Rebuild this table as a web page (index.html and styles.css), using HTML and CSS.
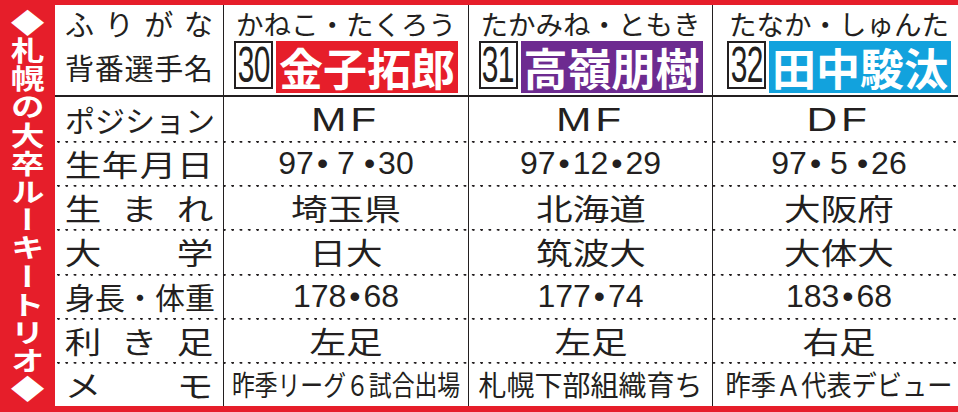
FILE: index.html
```html
<!DOCTYPE html>
<html lang="ja">
<head>
<meta charset="utf-8">
<title>札幌の大卒ルーキートリオ</title>
<link rel="stylesheet" href="styles.css">
</head>
<body>
<div class="frame">
  <div class="side"><span class="side-text">◆札幌の大卒ルーキートリオ◆</span></div>
  <div class="table">
    <div class="row head">
      <div class="label head-label">
        <div class="jl"><span>ふ</span><span>り</span><span>が</span><span>な</span></div>
        <div class="jl tall"><span>背</span><span>番</span><span>選</span><span>手</span><span>名</span></div>
      </div>
      <div class="cell head-cell">
        <div class="kana">かねこ・たくろう</div>
        <div class="badge"><span class="num"><span class="num-t">30</span></span><span class="name red">金子拓郎</span></div>
      </div>
      <div class="cell head-cell">
        <div class="kana">たかみね・ともき</div>
        <div class="badge"><span class="num"><span class="num-t">31</span></span><span class="name purple">高嶺朋樹</span></div>
      </div>
      <div class="cell head-cell">
        <div class="kana">たなか・しゅんた</div>
        <div class="badge"><span class="num"><span class="num-t">32</span></span><span class="name blue">田中駿汰</span></div>
      </div>
    </div>

    <div class="row first">
      <div class="label"><span>ポ</span><span>ジ</span><span>シ</span><span>ョ</span><span>ン</span></div>
      <div class="cell"><span class="pos">MF</span></div>
      <div class="cell"><span class="pos">MF</span></div>
      <div class="cell"><span class="pos">DF</span></div>
    </div>

    <div class="row">
      <div class="label wide"><span>生</span><span>年</span><span>月</span><span>日</span></div>
      <div class="cell"><span class="numv">97<i class="dot">•</i><span class="one">7</span><i class="dot">•</i>30</span></div>
      <div class="cell"><span class="numv">97<i class="dot">•</i>12<i class="dot">•</i>29</span></div>
      <div class="cell"><span class="numv">97<i class="dot">•</i><span class="one">5</span><i class="dot">•</i>26</span></div>
    </div>

    <div class="row">
      <div class="label wide"><span>生</span><span>ま</span><span>れ</span></div>
      <div class="cell"><span class="kv">埼玉県</span></div>
      <div class="cell"><span class="kv">北海道</span></div>
      <div class="cell"><span class="kv">大阪府</span></div>
    </div>

    <div class="row">
      <div class="label wide"><span>大</span><span>学</span></div>
      <div class="cell"><span class="kv">日大</span></div>
      <div class="cell"><span class="kv">筑波大</span></div>
      <div class="cell"><span class="kv">大体大</span></div>
    </div>

    <div class="row">
      <div class="label"><span>身</span><span>長</span><span>・</span><span>体</span><span>重</span></div>
      <div class="cell"><span class="numv">178<i class="dot">•</i>68</span></div>
      <div class="cell"><span class="numv">177<i class="dot">•</i>74</span></div>
      <div class="cell"><span class="numv">183<i class="dot">•</i>68</span></div>
    </div>

    <div class="row">
      <div class="label wide"><span>利</span><span>き</span><span>足</span></div>
      <div class="cell"><span class="kv">左足</span></div>
      <div class="cell"><span class="kv">左足</span></div>
      <div class="cell"><span class="kv">右足</span></div>
    </div>

    <div class="row">
      <div class="label wide"><span>メ</span><span>モ</span></div>
      <div class="cell"><span class="memo fit81">昨季リーグ６試合出場</span></div>
      <div class="cell"><span class="memo">札幌下部組織育ち</span></div>
      <div class="cell"><span class="memo fit90">昨季Ａ代表デビュー</span></div>
    </div>
  </div>
</div>
</body>
</html>
```

FILE: styles.css
```css
* { box-sizing: border-box; margin: 0; padding: 0; }
html, body { width: 958px; height: 412px; overflow: hidden; background: #e61e2a; }
body { font-family: "Noto Sans CJK JP", "Noto Sans", sans-serif; color: #231f20; }

.frame { display: flex; width: 958px; height: 412px; background: #e61e2a; }

.side { width: 55px; flex: none; display: flex; align-items: center; justify-content: center; }
.side-text {
  writing-mode: vertical-rl; text-orientation: upright;
  font-weight: 700; font-size: 27px; letter-spacing: 1.2px; line-height: 1;
  color: #fff; transform: scaleX(1.25);
}

.table { flex: 1; margin: 5px 7px 6px 0; background: #fff; display: flex; flex-direction: column; }

.row {
  display: grid; grid-template-columns: 168px 245px 244px 1fr; flex: 1;
  background-image: radial-gradient(circle at 1.5px 1.5px, #231f20 1.1px, transparent 1.6px);
  background-size: 8.3px 3px; background-repeat: repeat-x; background-position: 2px -1px;
}
.row.head { flex: none; height: 92px; border-bottom: 2px solid #231f20; background: none; }
.row.first { background: none; }

.cell { border-left: 1.5px solid #231f20; display: flex; align-items: center; justify-content: center; white-space: nowrap; }

.label { display: flex; align-items: center; justify-content: space-between; padding: 0 10px; font-size: 30px; line-height: 1; }
.label span { display: inline-block; }
.label.wide { padding: 0 13px; }
.label.wide span { transform: scaleX(1.22); }

.head-label { flex-direction: column; align-items: stretch; justify-content: flex-start; }
.jl { display: flex; justify-content: space-between; font-size: 29px; height: 36px; line-height: 36px; }
.jl.tall { height: 52px; line-height: 52px; }

.head-cell { flex-direction: column; justify-content: flex-start; }
.kana { font-size: 27.5px; height: 36px; line-height: 36px; }
.badge { display: flex; align-items: flex-start; gap: 3px; height: 52px; }
.num {
  width: 39px; height: 48px; border: 2px solid #231f20; background: #fff;
  display: flex; align-items: center; justify-content: center;
}
.num-t {
  display: inline-block; margin: 0 -12px;
  font-family: "Liberation Sans", Arial, sans-serif; font-size: 50px; line-height: 1;
  transform: scaleX(0.6); letter-spacing: -1px; color: #231f20;
}
.name { display: block; height: 52px; line-height: 52px; padding: 0 3px; font-size: 44px; font-weight: 700; color: #fff; }
.name.red { background: #e61e2a; }
.name.purple { background: #6d2b90; }
.name.blue { background: #12a2dd; }

.pos {
  display: inline-block; font-family: "Liberation Sans", Arial, sans-serif;
  font-size: 34px; line-height: 1; letter-spacing: 3px; transform: scaleX(1.25);
}
.numv { font-family: "Liberation Sans", Arial, sans-serif; font-size: 32px; line-height: 1; }
.numv .dot { font-style: normal; margin: 0 3px; }
.numv .one { display: inline-block; padding: 0 6px; }
.kv { display: inline-block; font-size: 30px; line-height: 1; transform: scaleX(1.22); }
.memo { display: inline-block; font-size: 28px; line-height: 1; }
.memo.fit81 { transform: scaleX(0.815); }
.memo.fit90 { transform: scaleX(0.9); }
```
